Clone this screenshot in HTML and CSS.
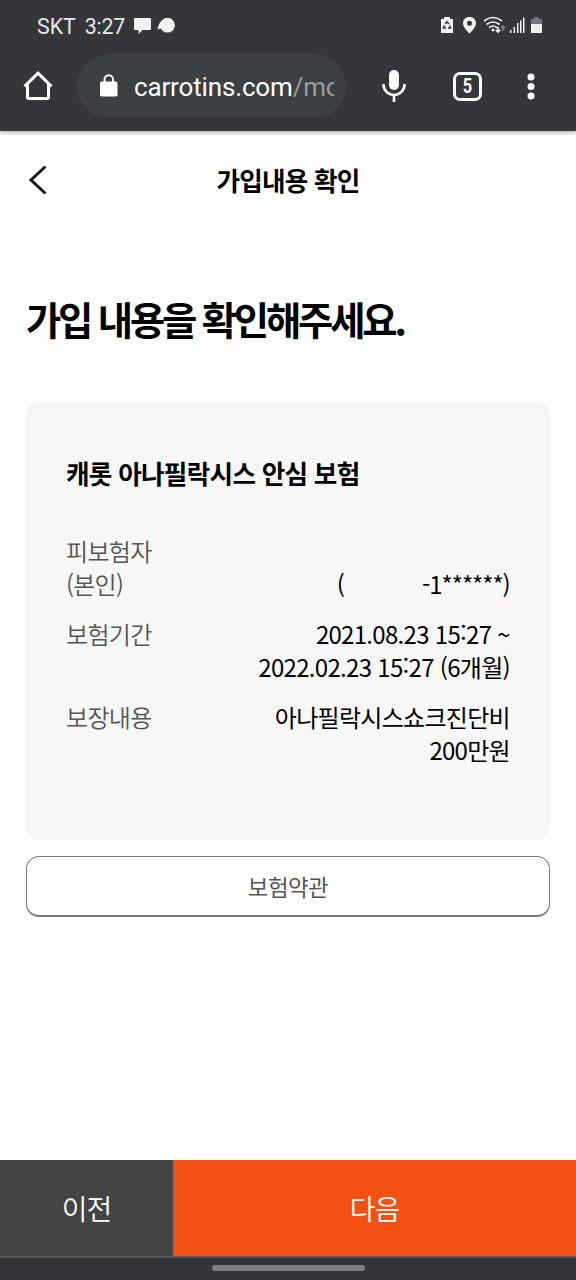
FILE: index.html
```html
<!DOCTYPE html>
<html lang="ko">
<head>
<meta charset="utf-8">
<title>가입내용 확인</title>
<link rel="stylesheet" href="styles.css">
</head>
<body>
<div class="screen">
  <div class="browser">
    <div class="status">
      <span class="carrier">SKT</span>
      <span class="clock">3:27</span>
      <svg class="notices" width="42" height="18" viewBox="0 0 42 18" fill="#f1f1f1">
        <path d="M1 0H16Q17 0 17 1V11Q17 12 16 12H8.500L4.500 16V12H1Q0 12 0 11V1Q0 0 1 0Z"/>
        <circle cx="33.500" cy="7.200" r="7.400"/><path d="M28 2.500Q24.500 5 23.500 11.500Q26 10.500 28 11Z"/>
      </svg>
      <svg class="signals" width="104" height="20" viewBox="0 0 104 20" fill="#f1f1f1">
        <path d="M1 3H4V1H10V3H13V17H1Z"/>
        <path d="M5.200 8L7 5.800L8.800 8M9.600 9.500L10.500 12H8M6 12H3.500L4.500 9.500" fill="none" stroke="#35363a" stroke-width="1.500"/>
        <path fill-rule="evenodd" d="M29.500 1C25.600 1 23 3.700 23 7.200C23 11.500 29.500 17.500 29.500 17.500S36 11.500 36 7.200C36 3.700 33.400 1 29.500 1ZM29.500 4.800A2.500 2.500 0 1 1 29.500 9.800A2.500 2.500 0 0 1 29.500 4.800Z"/>
        <g fill="none" stroke="#f1f1f1" stroke-width="1.700"><path d="M44 5Q53 -2 62 5M46.500 8.500Q53 3.500 59.500 8.500M49 11.500Q53 8.500 57 11.500"/><path d="M58 11V16M55.800 13.800L58 16L60.200 13.800"/></g>
        <circle cx="53" cy="14" r="1.400"/>
        <path d="M63 15V10M61 12L63 10L65 12" fill="none" stroke="#85868a" stroke-width="1.500"/>
        <path d="M70 14H71.500V17H70ZM73.600 11H75.100V17H73.600ZM77 7H78.500V17H77ZM80 4.500H81.500V17H80ZM83 1.500H84.500V17H83Z"/>
        <path d="M91 3H94V1H99V3H102V8H91Z" fill="#77787b"/><path d="M91 8H102V17H91Z"/>
      </svg>
    </div>
    <div class="toolbar">
      <svg class="home" width="30" height="30" viewBox="0 0 30 30" fill="none" stroke="#fff" stroke-width="3"><path d="M1.500 15.300L15 2.200L28.500 15.300M4.500 13.500V26Q4.500 27.500 6 27.500H24Q25.500 27.500 25.500 26V13.500"/></svg>
      <div class="address">
        <svg class="lock" width="18" height="23" viewBox="0 0 18 23"><rect y="7.500" width="17.500" height="15" rx="1.800" fill="#fff"/><path d="M4.500 8V5.500A4.250 4.250 0 0 1 13 5.500V8" fill="none" stroke="#fff" stroke-width="2"/></svg>
        <div class="url">carrotins.com<span class="path">/mo</span></div>
      </div>
      <svg class="mic" width="24" height="33" viewBox="0 0 24 33"><rect x="7" y="0" width="10" height="20" rx="5" fill="#fff"/><path d="M1.500 14V14.500A10.500 10.500 0 0 0 22.500 14.500V14M12 25V32" fill="none" stroke="#fff" stroke-width="2.600"/></svg>
      <div class="tabs"><span class="count">5</span></div>
      <svg class="more" width="8" height="27" viewBox="0 0 8 27" fill="#fff"><circle cx="4" cy="4" r="3.500"/><circle cx="4" cy="13.500" r="3.500"/><circle cx="4" cy="23" r="3.500"/></svg>
    </div>
  </div>
  <header class="header">
    <svg class="back" width="20" height="30" viewBox="0 0 20 30" fill="none" stroke="#1b1b1b" stroke-width="3"><path d="M17.500 1.500L3 15L17.500 28.500"/></svg>
    <div class="title"><span>가입내용 확인</span></div>
  </header>
  <main class="main">
    <h1 class="heading">가입 내용을 확인해주세요.</h1>
    <section class="card">
      <h2 class="product">캐롯 아나필락시스 안심 보험</h2>
      <dl class="details">
        <div class="row"><dt>피보험자<br>(본인)</dt><dd><br><span class="open">(</span><span class="masked">-1******</span>)</dd></div>
        <div class="row"><dt>보험기간</dt><dd>2021.08.23 15<span class="colon">:</span>27 ~<br>2022.02.23 15<span class="colon">:</span>27 (6개월)</dd></div>
        <div class="row"><dt>보장내용</dt><dd>아나필락시스쇼크진단비<br>200만원</dd></div>
      </dl>
    </section>
    <button class="terms">보험약관</button>
  </main>
  <div class="actions"><button class="prev">이전</button><button class="next">다음</button></div>
  <div class="navbar"><div class="handle"></div></div>
</div>
</body>
</html>
```
FILE: styles.css
```css
* { box-sizing: border-box; }
body { margin: 0; background: #fff; font-family: "Noto Sans CJK KR", sans-serif; color: #000; }
svg { display: block; flex: none; }
button { font: inherit; padding: 0; border: 0; border-radius: 0; }
.screen { width: 576px; height: 1280px; display: flex; flex-direction: column; overflow: hidden; }
.browser { flex: none; height: 131px; background: #35363a; color: #fff; font-family: Roboto, sans-serif; box-shadow: 0 1px 5px rgba(0,0,0,.4); }
.status { height: 54px; display: flex; align-items: flex-start; padding: 14px 32px 0 37px; font-size: 21.300px; line-height: 25px; color: #e8e8e8; }
.clock { margin-left: 9px; letter-spacing: -.2px; }
.notices { margin: 4px 0 0 9px; }
.signals { margin: 2px 0 0 auto; }
.toolbar { height: 64px; display: flex; align-items: center; padding-left: 23px; }
.address { width: 269px; height: 64px; margin-left: 24px; padding: 0 12px 0 23px; border-radius: 32px; background: #3c4043; display: flex; align-items: center; }
.lock { margin-top: -2px; }
.url { flex: 1; margin: 2px 0 0 16px; overflow: hidden; white-space: nowrap; font-size: 26px; line-height: 34px; letter-spacing: -.15px; }
.path { color: #9a9c9f; letter-spacing: -.3px; }
.mic { margin-left: 36px; }
.tabs { width: 29px; height: 29px; margin-left: 47px; border: 3px solid #fff; border-radius: 7px; font-size: 20px; line-height: 23px; font-weight: 700; text-align: center; }
.count { display: block; transform: scaleX(.82); }
.more { margin-left: 45px; }
.header { height: 98px; flex: none; display: flex; align-items: center; padding: 0 28px; }
.title { flex: 1; margin-right: 20px; text-align: center; font-size: 25.600px; line-height: 38px; font-weight: 700; letter-spacing: -.75px; }
.main { flex: 1; padding: 60px 26px 0; }
.heading { margin: 0; font-size: 38.400px; line-height: 58px; font-weight: 700; letter-spacing: -3.200px; white-space: nowrap; }
.card { height: 438px; margin-top: 55px; padding: 52px 40px; border-radius: 13px; background: #f7f7f7; }
.product { margin: 0; font-size: 25.600px; line-height: 38px; font-weight: 700; letter-spacing: -.7px; white-space: nowrap; }
.details { margin: 41.500px 0 0; display: flex; flex-direction: column; gap: 16.600px; font-size: 24px; line-height: 33.300px; letter-spacing: -.7px; }
.row { display: flex; justify-content: space-between; white-space: nowrap; }
.row dt { color: #555; font-weight: 350; }
.row dd { margin: 0; text-align: right; }
.open { margin-right: 78px; }
.masked { letter-spacing: -1.050px; }
.colon { vertical-align: 2px; line-height: 0; }
.terms { display: block; width: 100%; height: 61px; margin-top: 16px; border: 1.500px solid #777; border-bottom-width: 2px; border-radius: 13px; background: #fff; color: #555; font-size: 22.400px; letter-spacing: -.5px; }
.actions { height: 96px; flex: none; display: flex; }
.actions button { color: #fff; font-size: 28px; letter-spacing: -1px; font-weight: 350; }
.prev { width: 173px; background: #444; }
.next { flex: 1; background: #f35114; }
.navbar { height: 24px; flex: none; border-top: 2px solid #55575b; background: #35363a; padding-top: 7px; }
.handle { width: 153px; height: 6px; margin: 0 auto; border-radius: 3px; background: #7d7e81; }
```
